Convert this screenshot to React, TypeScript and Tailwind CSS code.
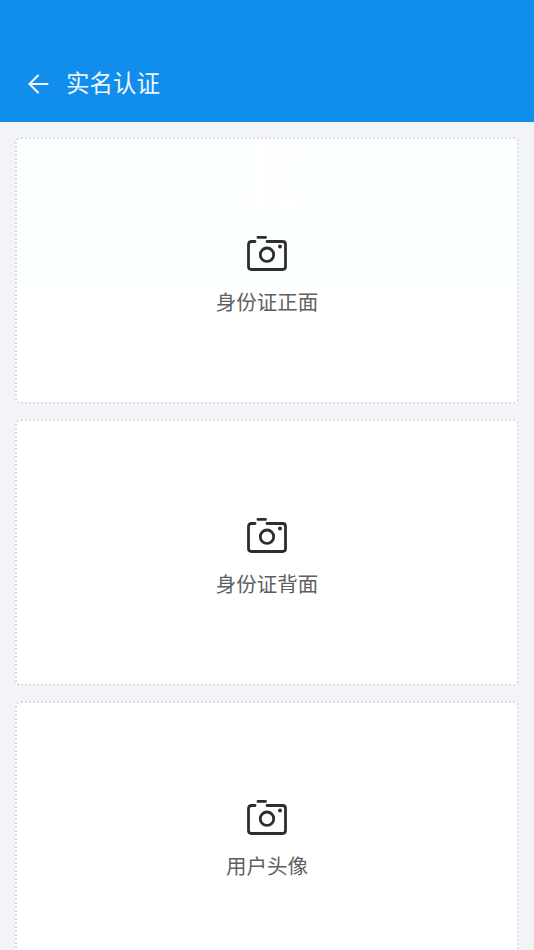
const cards = ['身份证正面', '身份证背面', '用户头像'];

function BackArrow() {
  return (
    <svg viewBox="0 0 24 24" className="w-6 h-6 shrink-0" fill="none" stroke="#f4f9fe" strokeWidth="2" strokeLinecap="round" strokeLinejoin="round">
      <path d="M20.500 12H2.500" />
      <path d="M11 3.500L2.500 12l8.500 8.500" />
    </svg>
  );
}

function CameraIcon() {
  return (
    <svg viewBox="0 0 40 36" className="relative w-10 h-9 shrink-0" fill="none" stroke="#2e2e2e" strokeWidth="2.800" strokeLinecap="round" strokeLinejoin="round">
      <path d="M11 1.400h7.500" />
      <path d="M8 5.500H4.500C2.500 5.500 1.500 6.500 1.500 8.500v22c0 2 1 3 3 3h31c2 0 3-1 3-3v-22c0-2-1-3-3-3H20" />
      <circle cx="20" cy="18.700" r="6.700" />
      <circle cx="33" cy="10.500" r="2" fill="#2e2e2e" stroke="none" />
    </svg>
  );
}

// faint ghost of the sample ID photo left behind the first card
function Watermark() {
  return (
    <svg viewBox="0 0 74 66" className="absolute left-[211px] top-[4px] w-[74px] h-[66px]" fill="#ffffff">
      <rect x="0" y="13" width="25" height="8" />
      <rect x="0" y="48" width="25" height="7" />
      <rect x="25" y="0" width="17" height="65" />
      <rect x="47" y="7" width="27" height="8" />
      <rect x="47" y="15" width="8" height="50" />
      <rect x="55" y="30" width="19" height="7" />
      <rect x="55" y="57" width="19" height="8" />
    </svg>
  );
}

function UploadCard({ label, tinted }: { label: string; tinted?: boolean }) {
  return (
    <div
      className={`relative h-[267px] shrink-0 rounded-[6px] border-2 border-dotted border-[#d8dadd] flex flex-col items-center justify-center pt-[12px] ${
        tinted ? 'bg-[linear-gradient(#fcffff_146px,#ffffff_146px)]' : 'bg-white'
      }`}
    >
      {tinted && <Watermark />}
      <CameraIcon />
      <span className="relative mt-[16px] text-[20.500px] leading-[30px] text-[#5f5f5f]">{label}</span>
    </div>
  );
}

export default function App() {
  return (
    <div className="h-[950px] overflow-hidden bg-[#f2f4f8] font-['Roboto','Noto_Sans_CJK_SC',sans-serif]">
      <header className="h-[122px] bg-[#118deb] flex items-end pb-[26px] pl-[27px]">
        <BackArrow />
        <h1 className="ml-[15px] -mb-[4px] text-[23.500px] leading-[32px] font-normal text-[#eef6fd]">实名认证</h1>
      </header>
      <main className="px-[15px] pt-[15px] flex flex-col gap-[15px]">
        {cards.map((label, i) => (
          <UploadCard key={label} label={label} tinted={i === 0} />
        ))}
      </main>
    </div>
  );
}
